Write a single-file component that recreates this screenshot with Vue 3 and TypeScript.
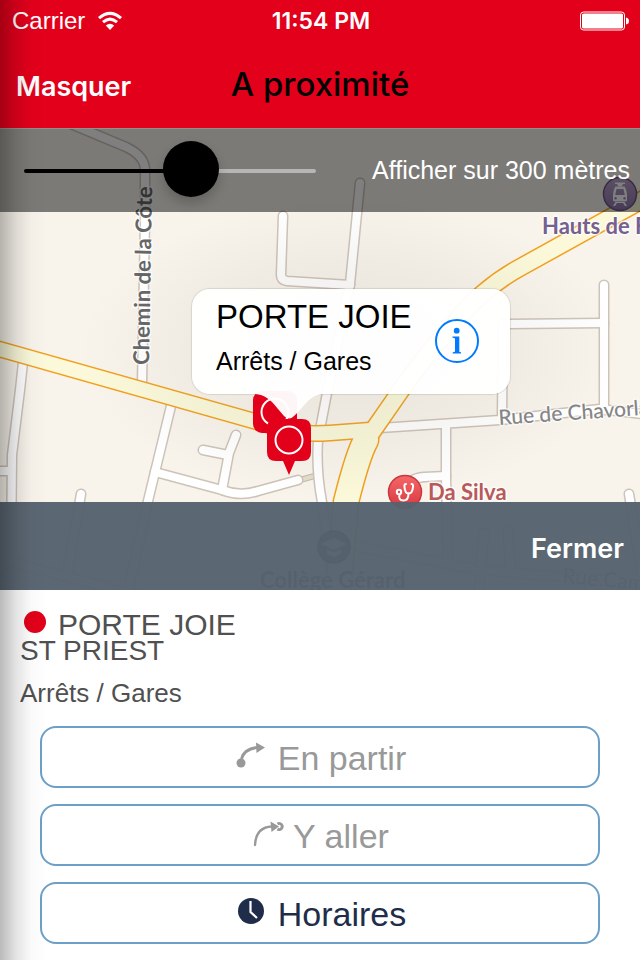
<script setup lang="ts">
import { computed, ref } from 'vue'

interface Road {
  d: string
  width: number
}

const minRadius = 100
const maxRadius = 440
const radius = ref(300)
const fill = computed(() => `${((radius.value - minRadius) / (maxRadius - minRadius)) * 100}%`)

const streets: Road[] = [
  { d: 'M66 122 L126 147 Q145 156 145 170 L145 220 L142 385', width: 8 },
  { d: 'M23 362 L20 390 L12 455 L11 560 L-5 572', width: 8 },
  { d: 'M-5 471 L11 471', width: 8 },
  { d: 'M11 562 L125 592 L200 606', width: 8 },
  { d: 'M81 494 L67 575', width: 8 },
  { d: 'M171 406 L155 472 L147 505 L128 592', width: 8 },
  { d: 'M155 472 L222 490 Q240 497 258 491 L298 480', width: 8 },
  { d: 'M222 490 L229 453 L236 435', width: 8 },
  { d: 'M203 450 L228 455', width: 8 },
  { d: 'M360 183 L350 284 L327 393 L318 440 Q316 470 322 502 L334 592', width: 8 },
  { d: 'M283 216 L281 275 Q281 280 287 281 L350 285', width: 8 },
  { d: 'M604 285 L604 410', width: 8 },
  { d: 'M503 324 L604 323', width: 8 },
  { d: 'M503 324 L502 418', width: 8 },
  { d: 'M380 428 L500 420 L600 409 L650 415', width: 8 },
  { d: 'M446 425 L446 478 L448 560', width: 8 },
  { d: 'M446 476 L424 477 Q408 478 404 492', width: 8 },
  { d: 'M629 494 L645 592', width: 8 },
  { d: 'M355 546 L480 570 L650 584', width: 8 },
  { d: 'M484 533 L478 600', width: 8 },
  { d: 'M508 530 L510 570', width: 8 }
]

const avenues: Road[] = [
  { d: 'M-8 347 L282 429 Q300 435 330 433 L370 430', width: 14 },
  { d: 'M660 190 L521 267 Q484 287 456 321 Q420 362 397 396 L372 432', width: 16 },
  { d: 'M366 440 Q358 454 346 502 L338 592', width: 24 }
]
</script>

<template>
  <main class="app">
    <header class="header">
      <div class="status">
        <span class="carrier">
          Carrier
          <svg class="wifi" viewBox="0 0 26 20" aria-hidden="true">
            <path d="M2 7.200 Q13 -2.500 24 7.200" />
            <path d="M6 11.200 Q13 5 20 11.200" />
            <path class="wifi-dot" d="M8.800 14.600 Q13 11 17.200 14.600 L13 19 Z" />
          </svg>
        </span>
        <time class="clock">11:54 PM</time>
        <svg class="battery" viewBox="0 0 50 20" aria-hidden="true">
          <rect class="battery-shell" x="0.500" y="1" width="44" height="18" rx="3" />
          <rect x="2" y="2.500" width="41" height="15" rx="1.500" />
          <path d="M46 6.500 Q49 7 49 10 Q49 13 46 13.500 Z" />
        </svg>
      </div>
      <nav class="nav">
        <button class="text-button" type="button">Masquer</button>
        <h1 class="title">A proximité</h1>
      </nav>
    </header>

    <section class="map">
      <svg class="map-canvas" viewBox="0 128 640 462" preserveAspectRatio="xMidYMid slice" aria-hidden="true">
        <defs>
          <radialGradient id="shade">
            <stop offset="0" stop-color="#80786c" stop-opacity="0.140" />
            <stop offset="0.600" stop-color="#80786c" stop-opacity="0.070" />
            <stop offset="1" stop-color="#80786c" stop-opacity="0" />
          </radialGradient>
          <linearGradient id="health" x1="0" y1="0" x2="0" y2="1">
            <stop offset="0" stop-color="#f4686a" />
            <stop offset="1" stop-color="#d8383f" />
          </linearGradient>
          <linearGradient id="transit" x1="0" y1="0" x2="0" y2="1">
            <stop offset="0" stop-color="#b9a2cc" />
            <stop offset="1" stop-color="#8f74ab" />
          </linearGradient>
        </defs>
        <rect x="0" y="128" width="640" height="462" fill="#f8f4ec" />
        <path d="M300 480 L318 475" class="path-case" />
        <path d="M300 480 L318 475" class="path-fill" />
        <g class="roads">
          <path v-for="(r, i) in streets" :key="`sc${i}`" :d="r.d" :stroke-width="r.width + 3" stroke="#cdc3b8" />
          <path v-for="(r, i) in streets" :key="`sf${i}`" :d="r.d" :stroke-width="r.width" stroke="#fff" />
          <path v-for="(r, i) in avenues" :key="`ac${i}`" :d="r.d" :stroke-width="r.width + 3" stroke="#f2a01c" />
          <path v-for="(r, i) in avenues" :key="`af${i}`" :d="r.d" :stroke-width="r.width" stroke="#fbf9da" />
        </g>
        <ellipse cx="350" cy="350" rx="270" ry="150" fill="url(#shade)" />

        <g class="labels">
          <text class="street" transform="translate(149 365) rotate(-89)">Chemin de la Côte</text>
          <text class="street light" transform="translate(499 425) rotate(-4)">Rue de Chavorlay</text>
          <text class="street light" transform="translate(562 583) rotate(5)">Rue Camille</text>
          <text class="station" x="542" y="234">Hauts de Feuilly</text>
          <text class="doctor" x="428" y="500">Da Silva</text>
          <text class="school" x="260" y="588">Collège Gérard</text>
        </g>

        <g transform="translate(620 194)">
          <circle r="16.500" fill="url(#transit)" stroke="#6f548c" stroke-width="1.500" />
          <g fill="#fff">
            <path d="M-5 -11.500 H5 V-10 H3 L1.500 -7.500 H-1.500 L-3 -10 H-5 Z" />
            <path fill-rule="evenodd" d="M-4.500 -7.500 H4.500 Q6.500 -5 7 1 V6 Q7 7.500 5 7.500 H-5 Q-7 7.500 -7 6 V1 Q-6.500 -5 -4.500 -7.500 Z M-3.500 -5 L-4.800 1 H4.800 L3.500 -5 Z M-4.500 3 a1.300 1.300 0 1 0 0.100 0 Z M4.500 3 a1.300 1.300 0 1 0 0.100 0 Z" />
            <path d="M-4.500 8 L-7 12 H-5 L-3 9 H3 L5 12 H7 L4.500 8 Z" />
          </g>
        </g>

        <g transform="translate(405 492)">
          <circle r="16.500" fill="url(#health)" stroke="#c8383e" stroke-width="1.500" />
          <g fill="none" stroke="#fff" stroke-width="2" stroke-linecap="round">
            <circle cx="-6" cy="0" r="2.200" />
            <path d="M-5.500 2.500 Q-7 8.500 -1.500 8.500 Q3.500 8.500 3.500 1.500" />
            <path d="M1 -8 Q-1 -8 -0.500 -5 Q0 1.500 3.500 1.500 Q7.500 1.500 8 -5 Q8.500 -8 6.500 -8" />
          </g>
        </g>

        <g transform="translate(334 547)">
          <circle r="16" fill="#4a4038" stroke="#2c2620" stroke-width="1.500" />
          <path d="M-13 -3 L0 -9 L13 -3 L0 3 Z M-7 2 L0 5.500 L7 2 V7 L0 10 L-7 7 Z" fill="#d8d2c8" />
        </g>

        <g>
          <rect x="253" y="391" width="44" height="42" rx="9" fill="#e2001a" />
          <circle cx="275" cy="412" r="13.500" class="ring" />
          <path d="M276 419 H302 Q311 419 311 428 V452 Q311 461 302 461 H295 L289 475 L283 461 H276 Q267 461 267 452 V428 Q267 419 276 419 Z" fill="#e2001a" />
          <circle cx="289" cy="440" r="13.500" class="ring" />
        </g>
      </svg>

      <div class="range-bar">
        <input
          id="radius"
          v-model.number="radius"
          class="slider"
          type="range"
          :min="minRadius"
          :max="maxRadius"
          step="10"
          :style="{ '--fill': fill }"
        />
        <label class="range-label" for="radius">Afficher sur {{ radius }} mètres</label>
      </div>

      <article class="callout">
        <div class="callout-text">
          <h2 class="callout-title">PORTE JOIE</h2>
          <p class="callout-sub">Arrêts / Gares</p>
        </div>
        <button class="info" type="button" aria-label="Informations">
          <svg viewBox="0 0 44 44" aria-hidden="true">
            <circle cx="22" cy="22" r="21" fill="none" stroke="#007aff" stroke-width="2" />
            <circle cx="21.700" cy="11.700" r="2.900" fill="#007aff" />
            <path d="M17.500 17.500 H24.300 V32.500 Q24.300 33.300 26 33.300 V34.500 H17.700 V33.300 Q20 33.300 20 32.300 V20 Q20 18.700 17.500 18.700 Z" fill="#007aff" />
          </svg>
        </button>
        <svg class="tail" viewBox="0 0 68 26" aria-hidden="true">
          <path d="M0 0 H68 C58 1 53 6 45 16 L39 22 Q34 27 29 22 L23 15 C15 5 10 1 0 0 Z" />
        </svg>
      </article>

      <div class="close-bar">
        <button class="text-button" type="button">Fermer</button>
      </div>
    </section>

    <section class="details">
      <h2 class="stop"><span class="dot"></span>PORTE JOIE</h2>
      <p class="city">ST PRIEST</p>
      <p class="kind">Arrêts / Gares</p>
      <div class="actions">
        <button class="action muted" type="button">
          <svg class="icon" viewBox="0 0 30 30" aria-hidden="true">
            <circle cx="5" cy="23" r="4.500" fill="currentColor" />
            <path d="M5.500 19 Q8 9 21 7.500" fill="none" stroke="currentColor" stroke-width="3" />
            <path d="M20 2.500 L29 7.500 L20.500 13 Z" fill="currentColor" />
          </svg>
          En partir
        </button>
        <button class="action muted tight" type="button">
          <svg class="icon wide" viewBox="0 0 32 30" aria-hidden="true">
            <path d="M2 27 Q3 9 19 8.500" fill="none" stroke="currentColor" stroke-width="2.400" stroke-linecap="round" />
            <path d="M17.500 3.500 L26 8.500 L18.500 14 Z" fill="currentColor" />
            <path d="M24.500 6 A3 3 0 1 1 24.500 11" fill="none" stroke="currentColor" stroke-width="2.800" />
          </svg>
          Y aller
        </button>
        <button class="action" type="button">
          <svg class="icon" viewBox="0 0 30 30" aria-hidden="true">
            <circle cx="15" cy="15" r="13" fill="currentColor" />
            <path d="M14.500 5 V16 L21 22" fill="none" stroke="#fff" stroke-width="2.200" />
          </svg>
          Horaires
        </button>
      </div>
    </section>

    <div class="edge-shadow"></div>
  </main>
</template>

<style>
body {
  margin: 0;
  background: #fff;
}
</style>

<style scoped>
.app {
  position: relative;
  min-height: 100vh;
  overflow: hidden;
  background: #fff;
  font-family: 'Liberation Sans', Arial, sans-serif;
}

h1,
h2,
p {
  margin: 0;
  font-weight: 400;
}

button {
  margin: 0;
  padding: 0;
  border: 0;
  background: none;
  font-family: inherit;
  cursor: pointer;
}

.header {
  background: #e3001b;
  color: #fff;
}

.status {
  display: grid;
  grid-template-columns: 1fr auto 1fr;
  align-items: center;
  box-sizing: border-box;
  height: 42px;
  padding: 0 10px 0 12px;
}

.carrier {
  display: flex;
  align-items: center;
  gap: 12px;
  font-size: 24px;
}

.wifi {
  width: 26px;
  height: 20px;
  fill: none;
  stroke: #fff;
  stroke-width: 3;
}

.wifi-dot {
  fill: #fff;
  stroke: none;
}

.clock {
  font-size: 23px;
  font-weight: 600;
  font-family: Inter, 'Liberation Sans', sans-serif;
}

.battery {
  justify-self: end;
  width: 50px;
  height: 20px;
  fill: #fff;
}

.battery-shell {
  fill: none;
  stroke: #fff;
}

.nav {
  display: grid;
  grid-template-columns: 1fr auto 1fr;
  align-items: baseline;
  box-sizing: border-box;
  height: 86px;
  padding: 22px 16px 0;
}

.text-button {
  justify-self: start;
  color: #fff;
  font-size: 27px;
  font-weight: 600;
  font-family: Inter, 'Liberation Sans', sans-serif;
}

.title {
  color: #000;
  font-size: 33px;
  font-weight: 500;
  font-family: Inter, 'Liberation Sans', sans-serif;
}

.map {
  position: relative;
  display: flex;
  flex-direction: column;
  justify-content: space-between;
  height: 462px;
}

.map-canvas {
  position: absolute;
  inset: 0;
  width: 100%;
  height: 100%;
}

.roads path {
  fill: none;
  stroke-linecap: round;
  stroke-linejoin: round;
}

.path-case {
  stroke: #c4b9aa;
  stroke-width: 6;
}

.path-fill {
  stroke: #e4dccb;
  stroke-width: 4;
}

.ring {
  fill: none;
  stroke: #fff;
  stroke-width: 2;
}

.labels text {
  font-family: Lato, 'Open Sans', sans-serif;
  font-size: 22px;
  font-weight: 700;
  paint-order: stroke;
  stroke: rgba(255, 255, 255, 0.7);
  stroke-width: 3;
  stroke-linejoin: round;
}

.labels .street {
  fill: #666;
}

.labels .light {
  font-size: 21px;
  font-weight: 500;
  fill: #858585;
}

.labels .station {
  fill: #75608f;
}

.labels .doctor {
  fill: #b85a5a;
}

.labels .school {
  fill: #5a5048;
}

.range-bar {
  position: relative;
  display: flex;
  align-items: center;
  justify-content: space-between;
  gap: 24px;
  box-sizing: border-box;
  height: 84px;
  padding: 0 10px 0 24px;
  border-top: 1px solid #92908b;
  background: rgba(0, 0, 0, 0.5);
}

.slider {
  flex: 0 1 292px;
  min-width: 120px;
  height: 56px;
  margin: 0;
  appearance: none;
  background: transparent;
}

.slider::-webkit-slider-runnable-track {
  height: 4px;
  border-radius: 2px;
  background: linear-gradient(to right, #000 var(--fill), #b6b5b7 var(--fill));
}

.slider::-webkit-slider-thumb {
  appearance: none;
  width: 56px;
  height: 56px;
  margin-top: -28px;
  border-radius: 50%;
  background: #000;
  box-shadow: 0 6px 12px rgba(0, 0, 0, 0.2);
}

.range-label {
  color: #fff;
  font-size: 25px;
  white-space: nowrap;
}

.callout {
  position: absolute;
  top: 161px;
  left: calc(50% - 128px);
  display: flex;
  align-items: center;
  justify-content: space-between;
  box-sizing: border-box;
  width: 318px;
  height: 105px;
  padding: 0 31px 2px 24px;
  border-radius: 18px;
  background: rgba(255, 255, 255, 0.96);
  box-shadow: 0 0 1px 1px rgba(0, 0, 0, 0.1);
  color: #000;
}

.callout-text {
  padding-bottom: 3px;
}

.callout-title {
  font-size: 33px;
  line-height: 44px;
}

.callout-sub {
  font-size: 25px;
  line-height: 44px;
}

.info {
  width: 44px;
  height: 44px;
}

.info svg {
  display: block;
}

.tail {
  position: absolute;
  top: 100%;
  left: 63px;
  width: 68px;
  height: 26px;
  fill: rgba(255, 255, 255, 0.96);
}

.close-bar {
  position: relative;
  display: flex;
  align-items: center;
  justify-content: flex-end;
  box-sizing: border-box;
  height: 88px;
  padding: 4px 16px 0;
  background: rgba(86, 98, 110, 0.97);
}

.details {
  padding: 20px 20px 16px;
  color: #505050;
}

.stop {
  display: flex;
  align-items: center;
  gap: 12px;
  padding-left: 4px;
  font-size: 30px;
  line-height: 30px;
}

.dot {
  width: 22px;
  height: 22px;
  margin-bottom: 6px;
  border-radius: 50%;
  background: #e2001a;
}

.city {
  font-size: 28px;
  line-height: 22px;
}

.kind {
  margin-top: 16px;
  font-size: 26px;
  line-height: 30px;
}

.actions {
  display: grid;
  gap: 16px;
  margin: 18px 20px 0;
}

.action {
  display: flex;
  align-items: center;
  justify-content: center;
  gap: 12px;
  box-sizing: border-box;
  height: 62px;
  padding: 2px 0 0 2px;
  border: 2px solid #6ca0c8;
  border-radius: 16px;
  background: #fff;
  color: #1f2d4a;
  font-size: 34px;
}

.muted {
  color: #999;
}

.tight {
  gap: 8px;
}

.icon {
  width: 30px;
  height: 30px;
  margin-bottom: 6px;
}

.wide {
  width: 32px;
}

.edge-shadow {
  position: absolute;
  inset: 0 auto 0 0;
  width: 48px;
  background: linear-gradient(to right, rgba(0, 0, 0, 0.27), rgba(0, 0, 0, 0.1) 35%, rgba(0, 0, 0, 0.02) 65%, transparent);
  pointer-events: none;
}
</style>
